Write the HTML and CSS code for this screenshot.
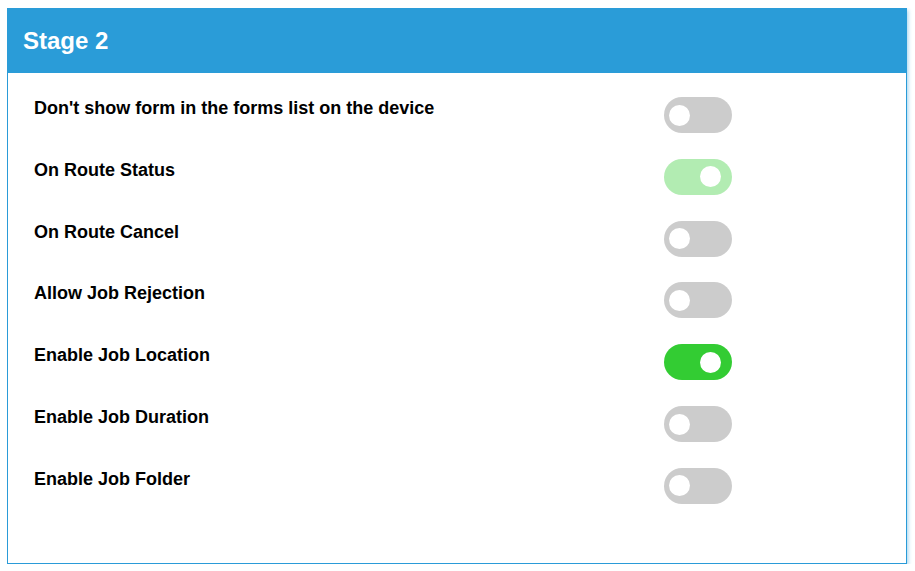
FILE: index.html
```html
<!DOCTYPE html>
<html>
<head>
<meta charset="utf-8">
<link rel="stylesheet" href="styles.css">
</head>
<body>
<div class="card">
  <div class="card-header"><h1 class="title">Stage 2</h1></div>
  <div class="card-body">
    <div class="row"><div class="label">Don't show form in the forms list on the device</div><div class="toggle"><span class="knob"></span></div></div>
    <div class="row"><div class="label">On Route Status</div><div class="toggle on disabled"><span class="knob"></span></div></div>
    <div class="row"><div class="label">On Route Cancel</div><div class="toggle"><span class="knob"></span></div></div>
    <div class="row"><div class="label">Allow Job Rejection</div><div class="toggle"><span class="knob"></span></div></div>
    <div class="row"><div class="label">Enable Job Location</div><div class="toggle on"><span class="knob"></span></div></div>
    <div class="row"><div class="label">Enable Job Duration</div><div class="toggle"><span class="knob"></span></div></div>
    <div class="row"><div class="label">Enable Job Folder</div><div class="toggle"><span class="knob"></span></div></div>
  </div>
</div>
</body>
</html>
```

FILE: styles.css
```css
* { box-sizing: border-box; }
html, body { background: #fff; }
body {
  margin: 8px 0 0 7px;
  font-family: "Liberation Sans", Arial, sans-serif;
}
.card {
  width: 900px;
  height: 556px;
  border: 1px solid #2a9bd8;
  background: #fff;
  box-shadow: 1px 2px 4px rgba(42,155,216,0.45);
  display: flex;
  flex-direction: column;
}
.card-header {
  background: #2a9cd8;
  height: 65px;
  margin: -1px -1px 0 -1px;
  padding: 0 0 0 16px;
  display: flex;
  align-items: center;
}
.title {
  margin: 0;
  color: #fff;
  font-size: 24px;
  font-weight: bold;
}
.card-body {
  padding: 24px 0 0 26px;
  display: flex;
  flex-direction: column;
  gap: 25.83px;
}
.row {
  display: flex;
  align-items: flex-start;
}
.label {
  width: 630px;
  padding-top: 1px;
  font-size: 18px;
  font-weight: bold;
  color: #000;
}
.toggle {
  width: 68px;
  height: 36px;
  border-radius: 18px;
  background: #cccccc;
  display: flex;
  align-items: center;
  padding-left: 5px;
}
.knob {
  width: 21px;
  height: 21px;
  border-radius: 50%;
  background: #fff;
}
.toggle.on { background: #33cc33; padding-left: 36px; }
.toggle.on.disabled { background: #b2ecb2; }
```
